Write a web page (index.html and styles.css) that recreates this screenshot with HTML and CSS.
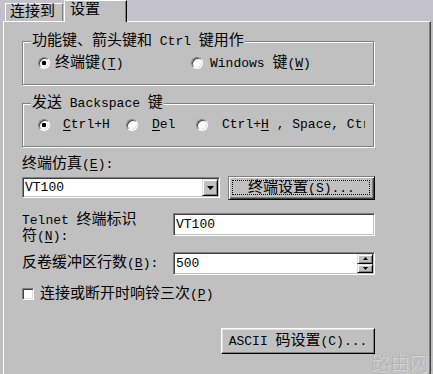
FILE: index.html
```html
<!DOCTYPE html>
<html>
<head>
<meta charset="utf-8">
<link rel="stylesheet" href="styles.css">
</head>
<body>
<div class="tabs">
  <div class="tab"><span class="c">连接到</span></div>
  <div class="tab active"><span class="c">设置</span></div>
</div>
<div class="panel">
  <div class="content">
    <fieldset class="group g1">
      <legend><span class="c">功能键、箭头键和</span> Ctrl <span class="c">键用作</span></legend>
      <div class="opts">
        <label class="opt o1"><span class="radio on"></span><span class="t"><span class="c">终端键</span>(<u>T</u>)</span></label>
        <label class="opt o2"><span class="radio"></span><span class="t">Windows <span class="c">键</span>(<u>W</u>)</span></label>
      </div>
    </fieldset>
    <fieldset class="group g2">
      <legend><span class="c">发送</span> Backspace <span class="c">键</span></legend>
      <div class="opts">
        <label class="opt o1"><span class="radio on"></span><span class="t"><u>C</u>trl+H</span></label>
        <label class="opt o2"><span class="radio"></span><span class="t"><u>D</u>el</span></label>
        <label class="opt o3"><span class="radio"></span><span class="t">Ctrl+<u>H</u> , Space, Ctrl+?</span></label>
      </div>
    </fieldset>

    <div class="lbl"><span class="c">终端仿真</span>(<u>E</u>):</div>
    <div class="row row1">
      <div class="combo sunk">
        <div class="val">VT100</div>
        <div class="arrow"><svg width="7" height="4" viewBox="0 0 7 4"><polygon points="0,0 7,0 3.5,4" fill="#000"/></svg></div>
      </div>
      <div class="btn def"><span class="bt"><span class="c">终端设置</span>(S)...</span></div>
    </div>

    <div class="row row2">
      <div class="lbl2">Telnet <span class="c">终端标识符</span>(<u>N</u>):</div>
      <div class="field sunk">VT100</div>
    </div>

    <div class="row row3">
      <div class="lbl3"><span class="c">反卷缓冲区行数</span>(<u>B</u>):</div>
      <div class="field spinf sunk">
        <div class="fv">500</div>
        <div class="spin">
          <div class="sb"><svg width="5" height="3" viewBox="0 0 5 3"><polygon points="0,3 5,3 2.5,0" fill="#000"/></svg></div>
          <div class="sb"><svg width="5" height="3" viewBox="0 0 5 3"><polygon points="0,0 5,0 2.5,3" fill="#000"/></svg></div>
        </div>
      </div>
    </div>

    <div class="row row4">
      <span class="check"></span>
      <span class="t"><span class="c">连接或断开时响铃三次</span>(<u>P</u>)</span>
    </div>

    <div class="btn ascii"><span class="bt">ASCII <span class="c">码设置</span>(C)...</span></div>
  </div>
</div>
<div class="wm">路由网</div>
</body>
</html>
```
FILE: styles.css
```css
html, body {
  margin: 0;
  padding: 0;
}
body {
  width: 433px;
  height: 374px;
  overflow: hidden;
  position: relative;
  background: #c0c0c0;
  color: #000;
  font-family: "Liberation Mono", "Noto Sans CJK SC", monospace;
  font-size: 13px;
  line-height: 16px;
}
.c {
  font-family: "Noto Sans CJK SC", sans-serif;
  font-size: 15px;
  line-height: 12px;
}
u {
  text-decoration: underline;
  text-underline-offset: 2px;
}

/* tabs */
.tabs {
  display: flex;
  height: 21px;
  background: #c3c2ca;
}
.tab {
  box-sizing: border-box;
  margin-left: 5px;
  margin-top: 3px;
  width: 58px;
  height: 18px;
  border-top: 1px solid #fff;
  border-left: 1px solid #fff;
  border-right: 1px solid #808080;
  background: #c0c0c0;
  padding-left: 4px;
  line-height: 16px;
  white-space: nowrap;
}
.tab.active {
  position: relative;
  z-index: 1;
  margin-left: 1px;
  margin-top: 0;
  width: 63px;
  height: 22px;
  border-right: 1px solid #000;
  box-shadow: inset -1px 0 0 #808080;
  padding-left: 5px;
  padding-top: 1px;
  line-height: 17px;
}

/* panel */
.panel {
  box-sizing: border-box;
  margin-left: 3px;
  width: 428px;
  height: 353px;
  border-top: 1px solid #fff;
  border-left: 1px solid #fff;
  border-right: 1px solid #404040;
  box-shadow: inset -1px 0 0 #808080;
  padding: 11px 0 0 18px;
}
.content {
  width: 353px;
  display: flex;
  flex-direction: column;
}

/* group boxes */
.group {
  margin: 0;
  padding: 6px 0 13px;
  border: 1px solid #808080;
  box-shadow: 1px 1px 0 #fff, inset 1px 1px 0 #fff;
  width: 352px;
  box-sizing: border-box;
  min-width: 0;
}
.group legend {
  margin-left: 8px;
  padding: 0 1px;
  height: 16px;
  line-height: 16px;
  background: #c0c0c0;
  white-space: nowrap;
}
.g2 {
  margin-top: 10px;
}
.opts {
  display: flex;
  align-items: center;
  height: 16px;
  padding-left: 15px;
}
.opt {
  display: flex;
  align-items: center;
  flex: none;
  white-space: nowrap;
}
.radio {
  flex: none;
  box-sizing: border-box;
  width: 12px;
  height: 12px;
  border-radius: 50%;
  border: 1px solid;
  border-color: #808080 #fff #fff #808080;
  box-shadow: inset 1px 1px 0 #404040, inset -1px -1px 0 #dfdfdf;
  background: #fff;
}
.radio.on {
  background: radial-gradient(circle at center, #000 0 2px, #fff 2.6px);
}
.g1 .o1 { width: 153px; }
.g1 .o1 .t { margin-left: 5px; }
.g1 .o2 .t { margin-left: 7px; }
.g2 .o1 { width: 88px; }
.g2 .o1 .t { margin-left: 13px; }
.g2 .o2 { width: 70px; }
.g2 .o2 .t { margin-left: 14px; }
.g2 .o3 { width: 169px; overflow: hidden; }
.g2 .o3 .t { margin-left: 14px; }

/* labels and rows */
.lbl {
  margin-top: 9px;
  height: 16px;
  white-space: nowrap;
}
.row {
  display: flex;
}
.row1 {
  margin-top: 4px;
  height: 24px;
  align-items: flex-start;
}
.row2 {
  margin-top: 12px;
  align-items: flex-start;
}
.row3 {
  margin-top: 8px;
  height: 23px;
  align-items: center;
}
.row4 {
  margin-top: 11px;
  height: 16px;
  align-items: center;
}
.lbl2 {
  width: 125px;
  line-height: 15px;
}
.lbl3 {
  white-space: nowrap;
}

/* sunken controls */
.sunk {
  box-sizing: border-box;
  border: 1px solid;
  border-color: #808080 #fff #fff #808080;
  box-shadow: inset 1px 1px 0 #404040, inset -1px -1px 0 #c0c0c0;
  background: #fff;
  padding: 1px;
}
.combo {
  margin-top: 1px;
  width: 198px;
  height: 21px;
  display: flex;
}
.combo .val {
  flex: 1;
  padding-left: 1px;
  line-height: 17px;
}
.arrow, .sb {
  box-sizing: border-box;
  background: #c0c0c0;
  border: 1px solid;
  border-color: #dfdfdf #000 #000 #dfdfdf;
  box-shadow: inset 1px 1px 0 #fff, inset -1px -1px 0 #808080;
  display: flex;
  align-items: center;
  justify-content: center;
}
.arrow {
  width: 16px;
  height: 17px;
}
.field {
  margin-left: auto;
  width: 202px;
  height: 23px;
  padding-left: 2px;
  line-height: 19px;
}
.row2 .field {
  margin-top: 1px;
}
.spinf {
  display: flex;
  padding-left: 1px;
}
.spinf .fv {
  flex: 1;
  padding-left: 1px;
}
.spin {
  width: 16px;
  display: flex;
  flex-direction: column;
}
.sb {
  flex: 1;
}
.check {
  box-sizing: border-box;
  width: 12px;
  height: 12px;
  border: 1px solid;
  border-color: #808080 #fff #fff #808080;
  box-shadow: inset 1px 1px 0 #404040, inset -1px -1px 0 #dfdfdf;
  background: #fff;
  margin-right: 6px;
}

/* buttons */
.btn {
  box-sizing: border-box;
  background: #c0c0c0;
  display: flex;
  align-items: center;
  justify-content: center;
  border: 1px solid;
  border-color: #fff #000 #000 #fff;
  box-shadow: inset -1px -1px 0 #808080, inset 1px 1px 0 #dfdfdf;
  white-space: nowrap;
}
.btn.def {
  margin-left: auto;
  width: 147px;
  height: 24px;
  position: relative;
  border-color: #808080 #000 #000 #808080;
  box-shadow: inset 1px 1px 0 #fff, inset -1px -1px 0 #404040, inset -2px -2px 0 #808080;
}
.btn.def::after {
  content: "";
  position: absolute;
  left: 3px;
  top: 3px;
  right: 4px;
  bottom: 4px;
  border: 1px dotted #000;
}
.btn.ascii {
  margin-top: 26px;
  align-self: flex-end;
  width: 154px;
  height: 26px;
}

/* watermark */
.wm {
  position: absolute;
  right: 5px;
  bottom: 1px;
  font-family: "Noto Sans CJK SC", sans-serif;
  font-size: 19px;
  font-weight: 300;
  line-height: 22px;
  color: #b2b2b2;
  text-shadow: 1px 1px 0 #d8d8d8;
}
```
